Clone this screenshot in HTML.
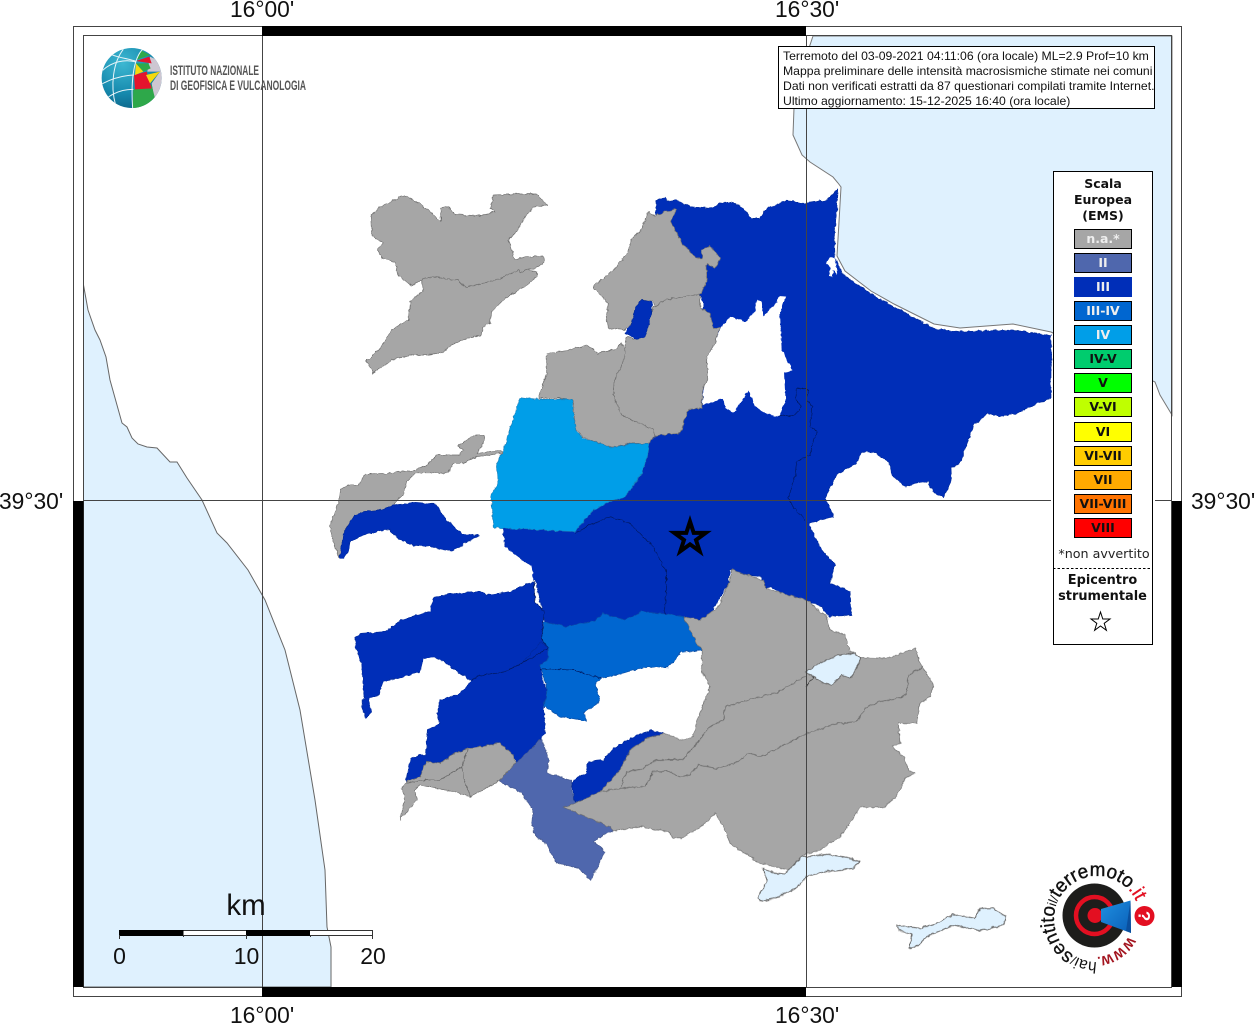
<!DOCTYPE html>
<html><head><meta charset="utf-8"><title>Mappa intensità macrosismiche</title>
<style>
html,body{margin:0;padding:0;background:#fff;width:1255px;height:1024px;overflow:hidden}
svg{display:block}
.s{font-family:"Liberation Sans",sans-serif}
.d{font-family:"DejaVu Sans",sans-serif}
.sw{font-family:"DejaVu Sans",sans-serif;font-weight:bold;font-size:12.5px;text-anchor:middle}
.g{fill:#a6a6a6;stroke:#6f6f6f;stroke-width:2;stroke-linejoin:round}
.b3{fill:#002eb8;stroke:#002a9c;stroke-width:2;stroke-linejoin:round}
.b34{fill:#0066d0;stroke:#0a4fa8;stroke-width:2;stroke-linejoin:round}
.b4{fill:#009ee8;stroke:#1a7fb8;stroke-width:2;stroke-linejoin:round}
.b2{fill:#4f67ad;stroke:#46598f;stroke-width:2;stroke-linejoin:round}
.l{fill:#dff1fe;stroke:#666;stroke-width:3;stroke-linejoin:round}
.il{fill:none;stroke:#666;stroke-width:2.4;stroke-linejoin:round}
.ib{fill:none;stroke:#00185e;stroke-width:2;stroke-linejoin:round}
</style></head><body>
<svg xmlns="http://www.w3.org/2000/svg" width="1255" height="1024" viewBox="0 0 1255 1024">
<defs>
<radialGradient id="gb" cx="35%" cy="25%" r="85%"><stop offset="0" stop-color="#3db8d2"/><stop offset=".6" stop-color="#1689ad"/><stop offset="1" stop-color="#0b5f83"/></radialGradient>
<linearGradient id="cone" x1="0" y1="0" x2="1" y2="1"><stop offset="0" stop-color="#1f8fe0"/><stop offset="1" stop-color="#0a5fb8"/></linearGradient>
<clipPath id="tb"><rect x="779" y="46.5" width="375.500" height="62"/></clipPath>
<clipPath id="gc"><circle cx="110" cy="108" r="90"/></clipPath>
<filter id="j" filterUnits="userSpaceOnUse" x="0" y="0" width="1255" height="1024" color-interpolation-filters="sRGB">
<feTurbulence type="fractalNoise" baseFrequency=".22" numOctaves="2" seed="4" result="n"/>
<feDisplacementMap in="SourceGraphic" in2="n" scale="3.500" xChannelSelector="R" yChannelSelector="G" result="d"/>
<feGaussianBlur in="d" stdDeviation=".35"/>
</filter>
<path id="arc" d="M1097 962 A43 43 0 1 1 1097 876 A43 43 0 1 1 1097 962"/>
<path id="arc2" d="M1094.500 881 A38 38 0 1 1 1094.500 957 A38 38 0 1 1 1094.500 881"/>
</defs>
<rect width="1255" height="1024" fill="#fff"/>

<!-- seas -->
<polygon points="83.500,285 88,310 95,330 100,340 106,357 110,380 122,423 127,427 132,438 138,444 147,447 157,448 170,462 177,462 187,478 202,500 217,533 227,543 248,570 265,600 285,650 300,710 315,800 325,870 327,927 331,947 331,987 83.500,987" fill="#dff1fe" stroke="#666" stroke-width="1"/>
<polygon points="813,36 805,60 795,100 794,108 793,135 802,155 810,162 833,177 838,183 841,187 839,222 837,256 845,271 871,291 894,304 934,324 960,328 1013,324 1051,332 1155,382 1160,395 1172,415 1172,36" fill="#dff1fe" stroke="#777" stroke-width="1"/>

<g filter="url(#j)">
<!-- Z8 main blue -->
<g transform="translate(640 170) scale(.33333)">
<polygon class="b3" points="47,135 50,90 75,80 85,95 110,90 150,110 205,115 255,95 300,105 335,145 360,145 380,115 440,92 495,100 560,90 595,55 590,120 583,200 585,265 610,315 690,370 760,410 880,475 960,485 1120,480 1233,497 1233,685 1190,700 1130,730 1080,740 1045,730 1000,765 985,810 960,880 933,895 935,930 910,982 880,965 865,935 830,940 795,950 755,915 750,880 710,850 665,845 650,880 590,915 555,985 580,1040 505,1060 545,1140 585,1185 570,1240 630,1265 635,1335 565,1340 545,1310 495,1290 430,1275 395,1250 375,1255 365,1220 320,1215 270,1200 265,1240 240,1285 210,1330 175,1350 130,1340 120,1380 -285,1380 -285,1355 -321,1200 -324,1190 -405,1130 -411,1074 -400,1000 -200,900 0,800 45,797 120,790 145,718 187,705 190,400 100,200"/>
<polygon fill="#fff" points="240,475 270,440 315,455 345,425 352,390 365,395 370,440 400,410 420,378 437,380 420,430 425,540 457,600 432,610 437,690 418,738 390,735 345,710 325,660 280,728 255,715 250,685 187,705 197,565 225,520"/>
<polygon fill="#fff" points="558,280 570,260 585,262 592,315 580,300 577,320 570,318 572,292"/>
<polyline class="ib" points="418,738 460,738 485,712 470,690 470,655 505,660 500,690 517,710 510,770 530,785 515,825 510,855 470,875 465,920 445,985 470,1025 495,1050"/>
</g>

<!-- Z9 west and south -->
<g transform="translate(340 570) scale(.33333)">
<polygon class="b3" points="45,205 60,190 135,185 185,150 235,135 270,125 280,85 325,72 420,65 440,75 510,65 580,35 585,95 612,125 605,205 625,235 545,280 495,305 410,320 395,332 360,310 320,280 280,260 250,265 240,305 190,320 130,335 115,375 85,385 95,425 78,445 65,410 72,380 65,280 50,240"/>
<polygon class="b3" points="395,332 410,320 495,305 545,280 605,215 625,235 625,265 600,285 610,340 622,360 612,410 615,490 580,530 530,580 520,555 480,520 385,535 345,550 300,580 258,575 240,620 198,638 212,565 235,555 258,555 262,480 300,460 292,430 300,390 360,370"/>
<polygon class="b34" points="605,205 612,155 680,170 765,152 790,130 855,150 905,125 975,132 1030,140 1060,200 1085,240 1025,245 985,292 925,290 785,325 765,340 780,395 730,430 740,452 660,440 612,410 622,360 600,285 625,265 625,235"/>
<polyline class="ib" points="600,298 700,300 785,325"/>
<polyline class="ib" points="625,235 545,280 495,305 410,320 395,332"/>
<polyline class="ib" points="580,0 585,95 612,125 605,205 625,235"/>
<polyline class="ib" points="980,0 975,132"/>
<polygon class="b2" points="478,632 525,580 580,530 605,505 625,565 622,610 695,630 695,660 705,700 670,712 810,770 820,782 780,800 762,815 795,845 775,885 752,930 715,895 650,878 620,825 585,795 575,760 580,720 545,670 500,645"/>
<polygon class="b3" points="705,700 695,640 710,625 740,610 745,575 790,570 820,535 890,495 930,483 975,490 920,505 870,540 840,600 780,665"/>
<polygon class="g" points="198,635 240,620 258,575 300,580 345,550 385,535 480,520 520,555 525,580 478,632 430,660 390,680 340,665 240,645 225,660 232,688 180,748 195,680 185,655"/>
<polyline class="il" points="200,638 260,630 300,630 365,590 385,535"/>
<polyline class="il" points="365,590 380,650 392,680"/>
</g>

<!-- Z7 north west -->
<g transform="translate(320 180) scale(.33333)">
<polygon fill="#002eb8" points="550,1040 555,1100 635,1160 640,1200 800,1200 800,1000 600,960"/>
<polygon class="g" points="152,105 190,75 250,47 290,65 330,95 362,125 362,85 385,80 405,103 480,108 525,95 510,85 520,45 600,42 650,42 682,75 640,80 610,120 590,155 565,180 585,240 620,230 670,228 672,245 645,265 620,270 595,280 540,295 490,310 435,322 415,300 380,298 345,290 310,295 275,318 235,285 225,245 185,235 172,210 190,190 155,165"/>
<polygon class="g" points="305,300 310,295 345,290 380,298 415,300 435,322 490,310 540,295 595,270 600,280 620,270 650,275 652,290 620,315 590,335 545,365 515,395 510,430 490,440 485,465 440,475 395,495 365,518 320,525 270,525 215,540 160,580 140,543 175,510 190,490 215,450 265,420 270,365 310,330"/>
<polygon class="g" points="818,320 850,295 880,270 925,215 935,175 965,150 985,95 1005,108 1050,90 1070,88 1052,125 1090,195 1130,235 1145,235 1145,208 1170,198 1202,235 1185,265 1160,250 1160,300 1145,340 1100,350 1040,358 1005,380 1000,365 965,360 945,385 935,430 915,450 865,445 860,405 865,370"/>
<polygon class="g" points="1005,380 1040,358 1100,350 1138,342 1140,380 1170,400 1180,445 1198,445 1185,490 1160,530 1162,600 1148,625 1145,685 1105,688 1080,760 1005,767 1000,750 905,705 880,650 885,590 905,560 915,490 920,470 945,478 975,450 1000,380"/>
<polygon class="g" points="680,520 740,512 800,495 835,520 880,510 905,490 915,515 905,560 885,590 880,650 905,705 1000,750 1005,770 985,790 930,790 880,803 855,795 790,772 765,745 760,660 715,655 655,655 670,610 680,580"/>
<polygon class="b4" points="600,652 655,658 715,658 758,658 760,710 770,755 790,775 855,795 880,805 930,792 985,790 985,820 965,880 945,910 915,950 870,965 820,990 765,1055 520,1043 513,945 535,910 530,850 550,810 570,745"/>
<polygon class="g" points="28,1040 55,970 60,930 85,915 115,915 135,882 200,880 285,870 320,855 350,825 420,825 430,810 415,795 465,765 493,765 490,790 470,820 548,812 548,820 470,830 430,850 400,850 385,878 330,880 285,880 260,905 250,945 230,960 220,980 180,990 130,995 100,1010 75,1050 65,1100 58,1135 45,1100"/>
<polygon class="b3" points="60,1135 70,1060 100,1010 130,995 180,990 225,975 285,967 345,972 380,1020 425,1060 478,1067 440,1085 415,1105 385,1112 330,1100 275,1095 235,1075 205,1048 170,1055 130,1065 90,1085 85,1115 70,1135"/>
<polygon class="b3" points="945,385 965,360 998,368 990,420 975,470 950,478 915,460 935,430"/>
<polyline class="ib" points="765,1060 800,1040 870,1010 930,1030 1000,1100 1040,1180 1040,1200"/>
</g>

<!-- Z10 south east -->
<g transform="translate(660 570) scale(.33333)">
<polygon class="g" points="70,140 120,150 175,110 210,30 215,0 310,30 320,55 385,75 440,90 500,140 510,180 555,195 570,245 600,262 680,265 765,235 782,285 795,300 820,345 810,380 780,400 770,460 715,460 720,520 695,530 735,565 745,600 765,610 735,625 710,680 670,712 600,712 570,760 540,800 480,840 430,855 385,900 300,880 210,820 190,770 165,730 130,765 65,805 40,805 25,785 -60,770 -140,782 -150,770 -290,712 -255,700 -180,665 -120,600 -90,540 -40,505 15,490 65,510 100,500 115,440 150,350 125,300 125,240 100,200"/>
<polyline class="il" points="437,318 350,368 280,385 195,410 190,450 150,470 110,520 70,568 -10,570 -60,600 -100,605 -120,655 -180,665"/>
<polyline class="il" points="790,290 745,315 740,370 720,383 660,395 615,415 590,455 530,460 440,490 380,520 305,560 265,548 235,575 170,595 115,585 90,615 60,620 25,603 -20,605 -45,650 -120,655"/>
<polygon class="l" points="437,305 480,280 535,255 585,250 602,265 590,295 570,325 545,315 515,345 490,340 460,320"/>
<polyline class="il" points="460,320 437,352" style="stroke:#333"/>
<polygon class="l" points="310,895 340,908 375,912 425,860 500,853 560,862 600,875 580,895 500,905 440,918 410,955 340,985 300,995 295,980 320,935"/>
<polygon class="l" points="710,1065 780,1075 830,1060 880,1033 945,1045 958,1015 1000,1015 1040,1040 1030,1065 960,1082 880,1065 800,1100 770,1130 748,1135 755,1095 715,1080"/>
</g>
</g>

<!-- star -->
<polygon points="690,521.500 693.700,532.900 705.700,532.900 696,540 699.700,551.300 690,544.300 680.300,551.300 684,540 674.300,532.900 686.300,532.900" fill="#002eb8" stroke="#000" stroke-width="4" stroke-miterlimit="10"/>

<!-- grid -->
<g stroke="#444" stroke-width="1" fill="none">
<line x1="262.500" y1="36" x2="262.500" y2="987"/>
<line x1="806.500" y1="36" x2="806.500" y2="987"/>
<line x1="83" y1="500.500" x2="1051" y2="500.500"/>
<line x1="1155" y1="500.500" x2="1172" y2="500.500"/>
<rect x="73.500" y="26.500" width="1108" height="970"/>
<rect x="83.500" y="35.500" width="1088" height="952"/>
</g>
<rect x="262" y="26" width="544" height="10" fill="#000"/>
<rect x="262" y="987" width="544" height="10" fill="#000"/>
<rect x="73" y="501" width="10.500" height="486" fill="#000"/>
<rect x="1172" y="501" width="10" height="486" fill="#000"/>

<!-- coordinates -->
<g class="s" font-size="22.800" fill="#111">
<text x="230" y="17">16°00'</text>
<text x="775" y="17">16°30'</text>
<text x="230" y="1023">16°00'</text>
<text x="775" y="1023">16°30'</text>
<text x="-1" y="509">39°30'</text>
<text x="1191" y="509">39°30'</text>
</g>

<!-- INGV logo -->
<g transform="translate(95 42) scale(.33333)">
<circle cx="110" cy="108" r="90" fill="url(#gb)"/>
<g clip-path="url(#gc)">
<polygon points="165,44 200,60 205,170 178,172 170,124 195,89 157,89" fill="#cdc7d2"/>
<polygon points="115,142 170,129 180,169 175,200 113,198" fill="#2ea84a"/>
<polygon points="117,99 155,89 170,139 120,142" fill="#e4142d"/>
<polygon points="153,99 195,89 165,124" fill="#f5d90e"/>
<polygon points="123,64 145,89 120,99" fill="#f5d90e"/>
<polygon points="123,64 160,64 167,79 145,89" fill="#2ea84a"/>
<polygon points="123,57 163,44 170,64" fill="#e4142d"/>
<polygon points="123,54 140,26 165,39" fill="#2ea84a"/>
<g fill="none" stroke="#e8f4f8" stroke-width="3">
<path d="M145 20 C112 50 108 130 113 200"/>
<path d="M85 22 C55 60 45 130 62 190"/>
<path d="M23 85 C50 60 90 50 123 60"/>
<path d="M22 125 C60 105 90 100 117 99"/>
<path d="M40 165 C65 148 90 142 115 142"/>
<path d="M50 38 C75 48 100 50 123 58"/>
</g>
</g>
</g>
<text class="s" x="170" y="75" font-size="13.500" font-weight="bold" fill="#555" textLength="89" lengthAdjust="spacingAndGlyphs">ISTITUTO NAZIONALE</text>
<text class="s" x="170" y="90" font-size="13.500" font-weight="bold" fill="#555" textLength="136" lengthAdjust="spacingAndGlyphs">DI GEOFISICA E VULCANOLOGIA</text>

<!-- title box -->
<rect x="778.500" y="46.500" width="376" height="62" fill="#fff" stroke="#000" stroke-width="1"/>
<g class="s" font-size="12.220" fill="#111" clip-path="url(#tb)">
<text x="783" y="60">Terremoto del 03-09-2021 04:11:06 (ora locale) ML=2.9 Prof=10 km</text>
<text x="783" y="75">Mappa preliminare delle intensità macrosismiche stimate nei comuni</text>
<text x="783" y="90">Dati non verificati estratti da 87 questionari compilati tramite Internet.</text>
<text x="783" y="105">Ultimo aggiornamento: 15-12-2025 16:40 (ora locale)</text>
</g>

<!-- legend -->
<rect x="1053.500" y="171.500" width="99" height="473" fill="#fff" stroke="#000" stroke-width="1"/>
<g class="d" font-size="12.500" font-weight="bold" text-anchor="middle" fill="#111">
<text x="1103" y="188">Scala</text>
<text x="1103" y="204">Europea</text>
<text x="1103" y="220">(EMS)</text>
</g>
<g stroke="#000" stroke-width="1">
<rect x="1074.500" y="229.500" width="57" height="19" fill="#a6a6a6"/>
<rect x="1074.500" y="253.500" width="57" height="19" fill="#4f67ad"/>
<rect x="1074" y="277" width="58" height="20" fill="#002eb8" stroke="none"/>
<rect x="1074.500" y="301.500" width="57" height="19" fill="#0066d0"/>
<rect x="1074.500" y="325.500" width="57" height="19" fill="#009ee8"/>
<rect x="1074.500" y="349.500" width="57" height="19" fill="#00cc6e"/>
<rect x="1074.500" y="373.500" width="57" height="19" fill="#00ff00"/>
<rect x="1074.500" y="397.500" width="57" height="19" fill="#bfff00"/>
<rect x="1074.500" y="422.500" width="57" height="19" fill="#ffff00"/>
<rect x="1074.500" y="446.500" width="57" height="19" fill="#ffcc00"/>
<rect x="1074.500" y="470.500" width="57" height="19" fill="#ffaa00"/>
<rect x="1074.500" y="494.500" width="57" height="19" fill="#ff7300"/>
<rect x="1074.500" y="518.500" width="57" height="19" fill="#ff0000"/>
</g>
<g class="sw" fill="#eee">
<text x="1103" y="243">n.a.*</text>
<text x="1103" y="267">II</text>
<text x="1103" y="291">III</text>
<text x="1103" y="315">III-IV</text>
<text x="1103" y="339">IV</text>
</g>
<g class="sw" fill="#111">
<text x="1103" y="363">IV-V</text>
<text x="1103" y="387">V</text>
<text x="1103" y="411">V-VI</text>
<text x="1103" y="436">VI</text>
<text x="1103" y="460">VI-VII</text>
<text x="1103" y="484">VII</text>
<text x="1103" y="508">VII-VIII</text>
<text x="1103" y="532">VIII</text>
</g>
<text class="d" x="1104" y="558" font-size="12.700" text-anchor="middle" fill="#222">*non avvertito</text>
<line x1="1053" y1="568.500" x2="1150" y2="568.500" stroke="#000" stroke-dasharray="2.500 2"/>
<g class="d" font-size="12.900" font-weight="bold" text-anchor="middle" fill="#111">
<text x="1102.500" y="584">Epicentro</text>
<text x="1102.500" y="600">strumentale</text>
</g>
<polygon points="1100.500,612 1102.800,619 1110,619 1104.200,623.300 1106.400,630.300 1100.500,626 1094.600,630.300 1096.800,623.300 1091,619 1098.200,619" fill="#fff" stroke="#000" stroke-width="1"/>

<!-- scale bar -->
<g>
<rect x="119.500" y="930.500" width="253" height="5" fill="#fff" stroke="#333" stroke-width="1"/>
<rect x="119" y="930" width="64.500" height="6" fill="#000"/>
<rect x="246" y="930" width="64" height="6" fill="#000"/>
<g stroke="#333" stroke-width="1"><line x1="119.500" y1="935" x2="119.500" y2="939"/><line x1="246.500" y1="935" x2="246.500" y2="939"/><line x1="372.500" y1="935" x2="372.500" y2="939"/><line x1="183.500" y1="935" x2="183.500" y2="937"/><line x1="310.500" y1="935" x2="310.500" y2="937"/></g>
</g>
<g class="s" fill="#111" text-anchor="middle">
<text x="246" y="915" font-size="29.500">km</text>
<text x="119.500" y="964" font-size="23">0</text>
<text x="246.500" y="964" font-size="23">10</text>
<text x="373" y="964" font-size="23">20</text>
</g>

<!-- hai sentito logo -->
<circle cx="1094.500" cy="915.500" r="32" fill="#1d1d1b"/>
<circle cx="1094.500" cy="915.500" r="18.500" fill="none" stroke="#e30f21" stroke-width="4.500"/>
<circle cx="1095" cy="915.500" r="7.500" fill="#e30f21"/>
<polygon points="1101,909 1130.500,900.500 1131,933 1101,922" fill="url(#cone)"/>
<polygon points="1130.500,900.500 1131,933 1126,931" fill="#0a4f9e"/>
<circle cx="1144.500" cy="916" r="10" fill="#e30f21"/>
<text class="s" font-size="17" font-weight="bold" fill="#fff" text-anchor="middle" transform="translate(1144.500 916) rotate(90)" y="6">?</text>
<text class="s" font-size="19.500" fill="#111"><textPath href="#arc" textLength="184" lengthAdjust="spacingAndGlyphs"><tspan font-size="16">hai</tspan><tspan font-size="13">/</tspan><tspan stroke="#111" stroke-width=".3">sentito</tspan><tspan font-size="13">il</tspan><tspan font-size="13">/</tspan><tspan stroke="#111" stroke-width=".4">terremoto</tspan><tspan fill="#e30f21" stroke="#e30f21" stroke-width=".3">.it</tspan></textPath></text>
<text class="s" font-size="13" font-weight="bold" fill="#a3141f"><textPath href="#arc2" startOffset="77">WWW.</textPath></text>
</svg>
</body></html>
